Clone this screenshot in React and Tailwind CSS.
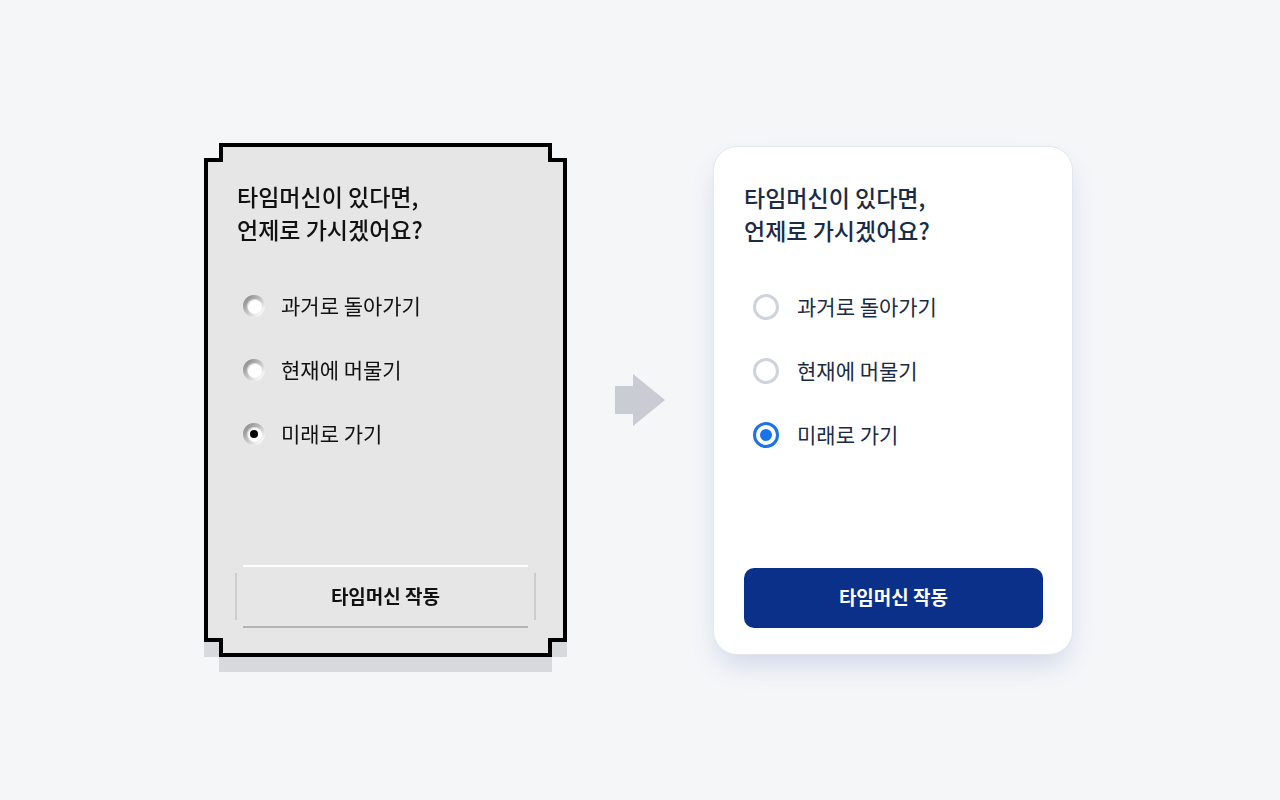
import { useState } from "react";

const options = ["과거로 돌아가기", "현재에 머물기", "미래로 가기"];

const font = { fontFamily: '"Noto Sans CJK KR", "Noto Sans", sans-serif' };

const RetroRadio = ({ checked }) => (
  <span className="w-[22px] h-[22px] rounded-full bg-[linear-gradient(135deg,#7a7a7a_0%,#bdbdbd_45%,#f4f4f4_80%,#ffffff_100%)] flex items-center justify-center shrink-0">
    <span className="w-[15px] h-[15px] rounded-full bg-white shadow-[inset_1px_1px_1px_rgba(0,0,0,0.15)] flex items-center justify-center">
      {checked && <span className="w-[8px] h-[8px] rounded-full bg-black" />}
    </span>
  </span>
);

const ModernRadio = ({ checked }) => (
  <span
    className={`w-[26px] h-[26px] rounded-full border-[3px] bg-white flex items-center justify-center shrink-0 ${
      checked ? "border-[#1a73e8]" : "border-[#cfd4dc]"
    }`}
  >
    {checked && <span className="w-[12px] h-[12px] rounded-full bg-[#1a73e8]" />}
  </span>
);

const Arrow = () => (
  <svg width="50" height="52" viewBox="0 0 50 52" className="shrink-0">
    <path d="M0 12 H18 V0 L50 26 L18 52 V40 H0 Z" fill="#c9ccd3" />
  </svg>
);

const App = () => {
  const [selected] = useState(2);

  return (
    <div
      className="w-full h-[800px] bg-[#f5f6f8] flex items-center justify-center gap-12 pr-[3px]"
      style={font}
    >
      {/* Retro card */}
      <div className="[filter:drop-shadow(0_15px_0_#d7d9dd)] shrink-0">
        <div className="w-[363px] h-[514px] bg-black p-[4px] [clip-path:polygon(15px_0,348px_0,348px_15px,363px_15px,363px_499px,348px_499px,348px_514px,15px_514px,15px_499px,0_499px,0_15px,15px_15px)]">
          <div className="w-full h-full bg-[#e6e6e6] flex flex-col px-[29px] pt-[33px] pb-[25px] [clip-path:polygon(15px_0,340px_0,340px_15px,355px_15px,355px_491px,340px_491px,340px_506px,15px_506px,15px_491px,0_491px,0_15px,15px_15px)]">
            <h2 className="text-[23px] leading-[33px] font-medium text-[#111]">
              타임머신이 있다면,
              <br />
              언제로 가시겠어요?
            </h2>
            <div className="mt-[28px] flex flex-col">
              {options.map((opt, i) => (
                <div key={opt} className="h-16 flex items-center gap-[16px] pl-[6px]">
                  <RetroRadio checked={selected === i} />
                  <span className="text-[21px] text-[#111]">{opt}</span>
                </div>
              ))}
            </div>
            <div className="flex-1" />
            <button className="-mx-[2px] h-[63px] p-[2px] bg-[linear-gradient(to_bottom,#ffffff_0,#ffffff_3px,#cdcdcd_3px,#cdcdcd_calc(100%_-_3px),#b4b4b4_calc(100%_-_3px))] [clip-path:polygon(8px_0,calc(100%_-_8px)_0,calc(100%_-_8px)_8px,100%_8px,100%_calc(100%_-_8px),calc(100%_-_8px)_calc(100%_-_8px),calc(100%_-_8px)_100%,8px_100%,8px_calc(100%_-_8px),0_calc(100%_-_8px),0_8px,8px_8px)]">
              <span className="w-full h-full flex items-center justify-center bg-[#e6e6e6] text-[19px] font-bold text-[#111] [clip-path:polygon(6px_0,calc(100%_-_6px)_0,calc(100%_-_6px)_6px,100%_6px,100%_calc(100%_-_6px),calc(100%_-_6px)_calc(100%_-_6px),calc(100%_-_6px)_100%,6px_100%,6px_calc(100%_-_6px),0_calc(100%_-_6px),0_6px,6px_6px)]">
                타임머신 작동
              </span>
            </button>
          </div>
        </div>
      </div>

      <Arrow />

      {/* Modern card */}
      <div className="w-[360px] h-[509px] shrink-0 bg-white border border-[#e3e6eb] rounded-[24px] shadow-[0_14px_28px_-6px_rgba(40,80,170,0.2)] flex flex-col pl-[30px] pr-[29px] pt-[34px] pb-[26px]">
        <h2 className="text-[23px] leading-[33px] font-medium text-[#1c2b45]">
          타임머신이 있다면,
          <br />
          언제로 가시겠어요?
        </h2>
        <div className="mt-[28px] flex flex-col">
          {options.map((opt, i) => (
            <div key={opt} className="h-16 flex items-center gap-[18px] pl-[9px]">
              <ModernRadio checked={selected === i} />
              <span className="text-[21px] text-[#1c2b45]">{opt}</span>
            </div>
          ))}
        </div>
        <div className="flex-1" />
        <button className="h-[60px] rounded-[10px] bg-[#0b308a] text-white text-[19px] font-bold">
          타임머신 작동
        </button>
      </div>
    </div>
  );
};

export default App;
